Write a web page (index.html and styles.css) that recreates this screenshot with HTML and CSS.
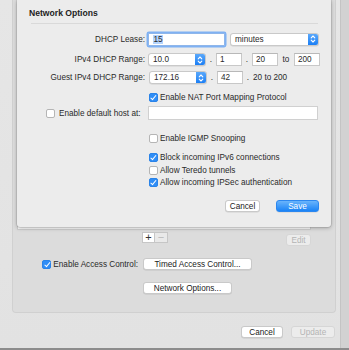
FILE: index.html
```html
<!DOCTYPE html>
<html>
<head>
<meta charset="utf-8">
<link rel="stylesheet" href="styles.css">
</head>
<body>
<div class="window">
  <div class="panel">
    <div class="listbox"></div>
    <div class="list-tools">
      <div class="seg">
        <span class="seg-btn">+</span><span class="seg-btn dis">−</span>
      </div>
      <span class="btn small dis edit">Edit</span>
    </div>
    <div class="prow access">
      <div class="plabel"><span class="cb on"></span>Enable Access Control:</div>
      <span class="btn timed">Timed Access Control...</span>
    </div>
    <div class="prow netopt">
      <div class="plabel"></div>
      <span class="btn nopt">Network Options...</span>
    </div>
  </div>
  <div class="footer">
    <span class="btn fcancel">Cancel</span>
    <span class="btn dis fupdate">Update</span>
  </div>
  <div class="edge-right"></div>

  <div class="sheet">
    <div class="title">Network Options</div>
    <div class="sep"></div>

    <div class="row r1">
      <div class="label">DHCP Lease:</div>
      <div class="field focus lease"><span class="sel">15</span></div>
      <div class="popup minutes"><span class="ptext">minutes</span><span class="stepper"><svg viewBox="0 0 10 12" width="10" height="12"><path d="M3.2 4.8 L5 3 L6.8 4.8 M3.2 7.2 L5 9 L6.8 7.2" fill="none" stroke="#fff" stroke-width="1.1" stroke-linecap="round" stroke-linejoin="round"/></svg></span></div>
    </div>

    <div class="row r2">
      <div class="label">IPv4 DHCP Range:</div>
      <div class="popup ip"><span class="ptext">10.0</span><span class="stepper"><svg viewBox="0 0 10 12" width="10" height="12"><path d="M3.2 4.8 L5 3 L6.8 4.8 M3.2 7.2 L5 9 L6.8 7.2" fill="none" stroke="#fff" stroke-width="1.1" stroke-linecap="round" stroke-linejoin="round"/></svg></span></div>
      <span class="dot">.</span>
      <div class="field oct">1</div>
      <span class="dot">.</span>
      <div class="field oct">20</div>
      <span class="to">to</span>
      <div class="field oct">200</div>
    </div>

    <div class="row r3">
      <div class="label">Guest IPv4 DHCP Range:</div>
      <div class="popup ip"><span class="ptext">172.16</span><span class="stepper"><svg viewBox="0 0 10 12" width="10" height="12"><path d="M3.2 4.8 L5 3 L6.8 4.8 M3.2 7.2 L5 9 L6.8 7.2" fill="none" stroke="#fff" stroke-width="1.1" stroke-linecap="round" stroke-linejoin="round"/></svg></span></div>
      <span class="dot">.</span>
      <div class="field oct">42</div>
      <span class="dot">.</span>
      <span class="range">20 to 200</span>
    </div>

    <div class="row r4">
      <div class="label"></div>
      <label class="check"><span class="cb on"></span>Enable NAT Port Mapping Protocol</label>
    </div>

    <div class="row r5">
      <div class="label"><span class="cb"></span>Enable default host at:</div>
      <div class="field host"></div>
    </div>

    <div class="row r6">
      <div class="label"></div>
      <label class="check"><span class="cb"></span>Enable IGMP Snooping</label>
    </div>

    <div class="checks">
      <label class="check"><span class="cb on"></span>Block incoming IPv6 connections</label>
      <label class="check"><span class="cb"></span>Allow Teredo tunnels</label>
      <label class="check"><span class="cb on"></span>Allow incoming IPSec authentication</label>
    </div>

    <div class="actions">
      <span class="btn scancel">Cancel</span>
      <span class="btn save">Save</span>
    </div>
  </div>
</div>
</body>
</html>
```
FILE: styles.css
```css
* { box-sizing: border-box; }
html, body { margin: 0; padding: 0; }
body {
  font-family: "Liberation Sans", Arial, sans-serif;
  font-size: 8.2px;
  color: #2a2a2a;
  background: #e4e4e4;
}
.window {
  position: relative;
  width: 349px;
  height: 350px;
  overflow: hidden;
  background: linear-gradient(#e6e6e6, #e2e2e2);
  border-bottom: 2px solid #8c8c8c;
}
.edge-right {
  position: absolute;
  top: 0; right: 0;
  width: 9px; height: 350px;
  background: #d2d2d2;
  border-left: 1px solid #c4c4c4;
}
.panel {
  margin-left: 12px;
  width: 324px;
  height: 313px;
  background: #dcdcdc;
  border: 1px solid #d0d0d0;
  border-top: none;
  border-radius: 0 0 4px 4px;
  padding-left: 4px;
}
.listbox {
  width: 294px;
  height: 230px;
  background: #fbfbfb;
  border: 1px solid #cfcfcf;
  border-top: none;
}
.list-tools {
  display: flex;
  align-items: flex-start;
  margin-top: 2px;
  padding-left: 125px;
  width: 294px;
}
.seg { display: flex; }
.seg-btn {
  width: 13px; height: 11px;
  background: #fff;
  border: 1px solid #c6c6c6;
  display: flex; align-items: center; justify-content: center;
  font-size: 11px; line-height: 1;
  color: #333;
}
.seg-btn + .seg-btn { border-left: none; }
.seg-btn.dis { background: #e9e9e9; color: #b8b8b8; }
.btn {
  display: inline-flex;
  align-items: center;
  justify-content: center;
  height: 12px;
  background: #fff;
  border: 1px solid #c9c9c9;
  border-radius: 3px;
  box-shadow: 0 0.5px 0.5px rgba(0,0,0,0.12);
  color: #222;
  white-space: nowrap;
}
.btn.dis { background: #ececec; color: #b4b4b4; border-color: #d6d6d6; box-shadow: none; }
.edit { margin-left: auto; margin-top: 2px; width: 25px; height: 12px; }
.prow { display: flex; align-items: center; }
.plabel {
  width: 121px;
  display: flex; align-items: center; justify-content: flex-end;
  margin-right: 5px;
}
.plabel .cb { margin-right: 2px; }
.access { margin-top: 12px; }
.netopt { margin-top: 12px; }
.timed { width: 109px; }
.nopt { width: 89px; }
.footer {
  display: flex;
  justify-content: flex-end;
  gap: 8px;
  padding-right: 14px;
  margin-top: 13px;
}
.fcancel { width: 42px; }
.fupdate { width: 44px; }

.cb {
  display: inline-block;
  width: 9px; height: 9px;
  border: 1px solid #b5b5b5;
  border-radius: 2px;
  background: #fff;
  position: relative;
  flex: none;
}
.cb.on { background: #2f8df6; border-color: #2a83e8; }
.cb.on::after {
  content: "";
  position: absolute;
  left: 2.4px; top: 0.3px;
  width: 2px; height: 4.6px;
  border: solid #fff;
  border-width: 0 1.2px 1.2px 0;
  transform: rotate(40deg);
}

.sheet {
  position: absolute;
  left: 17px; top: 0;
  width: 314px; height: 227px;
  background: #ececec;
  box-shadow: 0 1px 4px rgba(0,0,0,0.28), 0 0 0 0.5px rgba(0,0,0,0.15);
  border-radius: 0 0 3px 3px;
}
.title {
  font-weight: bold;
  font-size: 8.6px;
  color: #222;
  padding: 8px 0 0 12px;
  line-height: 11px;
}
.sep {
  margin: 4px 13px 0 14px;
  height: 1px;
  background: #d9d9d9;
}
.row { display: flex; align-items: center; }
.label {
  width: 128px;
  margin-right: 3px;
  text-align: right;
  display: flex; align-items: center; justify-content: flex-end;
  white-space: nowrap;
}
.label .cb { margin-right: 3px; }
.r5 .label { justify-content: flex-start; padding-left: 29px; }
.r5 .label .cb { margin-right: 4px; }
.field {
  height: 13px;
  background: #fff;
  border: 1px solid #c8c8c8;
  border-top-color: #b8b8b8;
  padding: 0 4px;
  display: flex; align-items: center;
}
.r1 { margin-top: 8px; height: 14px; }
.lease {
  width: 77px;
  border: 1px solid #8fb6ea;
  box-shadow: 0 0 0 1.5px #7fb1f3;
  border-radius: 1px;
}
.sel { background: #b4d4fd; padding: 0 0.5px; }
.popup {
  height: 13px;
  background: #fff;
  border: 1px solid #c9c9c9;
  border-radius: 3px;
  display: flex; align-items: center;
  box-shadow: 0 0.5px 0.5px rgba(0,0,0,0.12);
  overflow: hidden;
}
.ptext { flex: 1; padding-left: 4px; }
.stepper {
  width: 10px; height: 100%;
  background: linear-gradient(#5aa8fb, #1b7ff5);
  display: flex; align-items: center; justify-content: center;
}
.minutes { width: 89px; margin-left: 5px; }
.r2 { margin-top: 7px; }
.r3 { margin-top: 5px; }
.ip { width: 58px; }
.r3 .ip { margin-left: 1px; }
.dot { width: 10px; text-align: center; }
.oct { width: 26px; padding-left: 3px; }
.to { width: 16px; text-align: center; }
.range { margin-left: 0; }
.r4 { margin-top: 9px; }
.check { display: flex; align-items: center; white-space: nowrap; }
.check .cb { margin-right: 2px; }
.r4 .check, .r6 .check { margin-left: 1px; }
.r5 { margin-top: 4px; }
.host { width: 170px; height: 14px; border-color: #d0d0d0; }
.r6 { margin-top: 14px; }
.checks {
  margin-top: 10px;
  padding-left: 132px;
  display: flex; flex-direction: column;
  gap: 3.5px;
}
.actions {
  display: flex;
  justify-content: flex-end;
  gap: 16px;
  padding-right: 12px;
  margin-top: 13px;
}
.scancel { width: 35px; }
.save {
  width: 43px;
  background: linear-gradient(#6ab4fb, #1a83f6);
  border-color: #2c87ef;
  color: #fff;
}
```
